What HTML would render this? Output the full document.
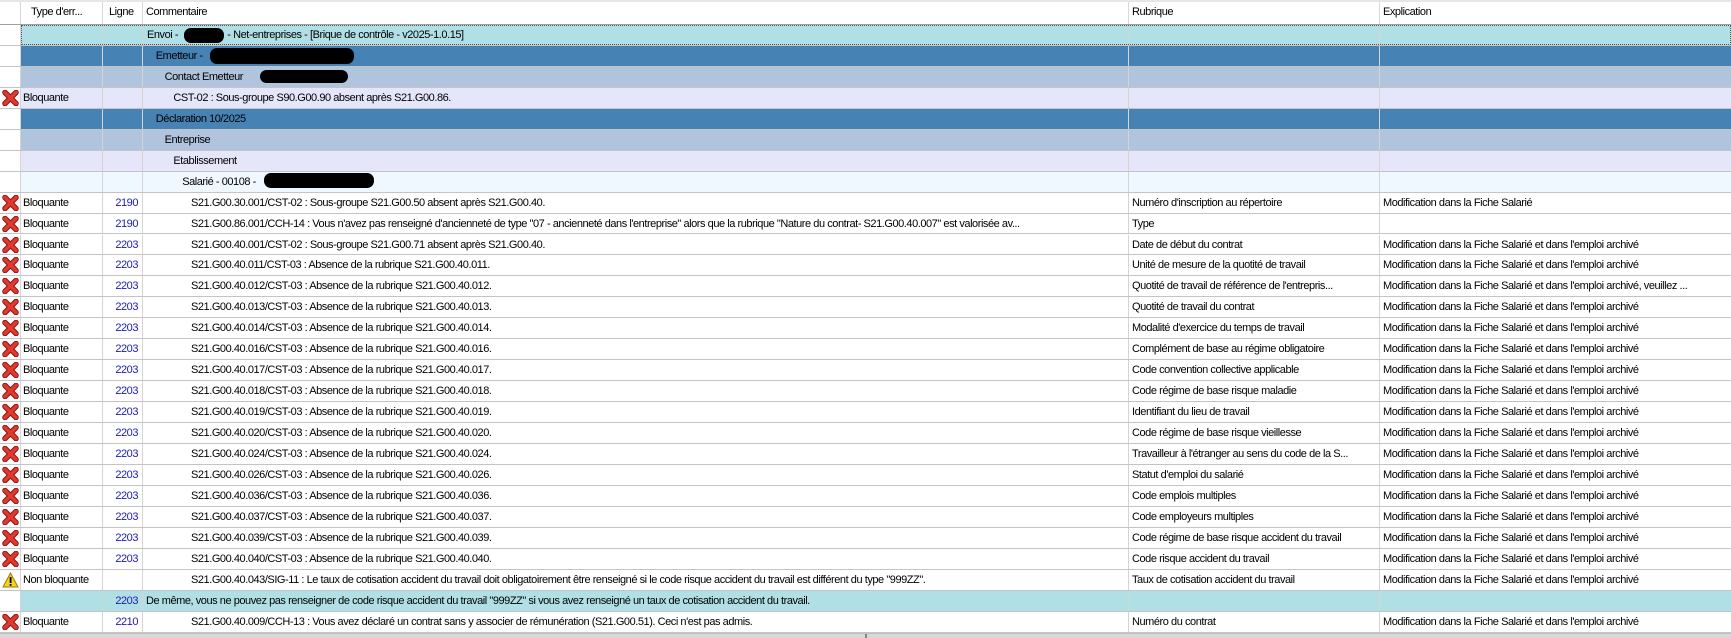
<!DOCTYPE html>
<html><head><meta charset="utf-8"><style>
*{margin:0;padding:0;box-sizing:border-box}
body{width:1731px;height:638px;overflow:hidden;background:#fff;font-family:"Liberation Sans",Tahoma,sans-serif;font-size:11px;letter-spacing:-0.45px;color:#000;position:relative}
.hdr{position:absolute;left:0;top:0;width:1731px;height:25px;border-top:2px solid #e4e6ea;border-bottom:1px solid #a0a0a0;background:#fff}
.hdr div{position:absolute;top:0;height:22px;line-height:21px;border-right:1px solid #d8d8d8;padding-left:4px}
.row{position:absolute;left:0;width:1731px;height:20.95px;border-bottom:1px solid #c4c4c4}
.c{position:absolute;top:0;height:100%;border-right:1px solid #d4d4d4;line-height:20px;white-space:nowrap;overflow:hidden}
.c0{left:0;width:21px;background:#fff}
.c1{left:21px;width:82px;padding-left:2px}
.c2{left:103px;width:40px;text-align:right;padding-right:4px;color:#1a1ab4}
.c3{left:143px;width:986px}
.c4{left:1129px;width:251px;padding-left:3px}
.c5{left:1380px;width:351px;padding-left:3px}
.blob{position:absolute;background:#000;border-radius:7px}
.ic{position:absolute;left:2px;top:2px}
.sb{position:absolute;left:0;top:633px;width:1731px;height:5px;background:#d8d8d8;border-top:1px solid #c0c0c0}
</style></head><body>
<div class="hdr">
<div style="left:0;width:21px"></div>
<div style="left:21px;width:82px;padding-left:10px">Type d'err...</div>
<div style="left:103px;width:40px;padding-left:6px">Ligne</div>
<div style="left:143px;width:986px;padding-left:3px">Commentaire</div>
<div style="left:1129px;width:251px;padding-left:3px">Rubrique</div>
<div style="left:1380px;width:351px;padding-left:3px;border:none">Explication</div>
</div>
<div id="rows"></div>
<div class="blob" style="left:184px;top:28px;width:40px;height:15px"></div>
<div class="blob" style="left:210px;top:48px;width:144px;height:16px"></div>
<div class="blob" style="left:260px;top:70px;width:88px;height:13px"></div>
<div class="blob" style="left:264px;top:173px;width:110px;height:15px"></div>
<div class="sb"><div style="position:absolute;left:865px;top:0;width:2px;height:4px;background:#888"></div></div>
<script>
const X='<svg class="ic" width="17" height="16" viewBox="0 0 17 16"><path d="M3 2.5L14 13.5M14 2.5L3 13.5" stroke="#8a1010" stroke-width="5.5" stroke-linecap="round"/><path d="M3 2.5L14 13.5M14 2.5L3 13.5" stroke="#e03a2e" stroke-width="3.6" stroke-linecap="round"/></svg>';
const W='<svg class="ic" width="17" height="16" viewBox="0 0 17 16"><path d="M8.5 1L16 15H1Z" fill="#f6d21a" stroke="#a07800" stroke-width="1"/><rect x="7.7" y="5" width="1.8" height="6" fill="#000"/><rect x="7.7" y="12" width="1.8" height="1.8" fill="#000"/></svg>';
const A='S21.G00.40.0';
const rows=[
['g','#b0e0e6','','','Envoi - <span style="display:inline-block;width:44px"></span> - Net-entreprises - [Brique de contrôle - v2025-1.0.15]',0,'',''],
['g','#4682b4','','','Emetteur -',1,'',''],
['g','#b0c4de','','','Contact Emetteur',2,'',''],
['x','#e6e6fa','Bloquante','','CST-02 : Sous-groupe S90.G00.90 absent après S21.G00.86.',3,'',''],
['g','#4682b4','','','Déclaration 10/2025',1,'',''],
['g','#b0c4de','','','Entreprise',2,'',''],
['g','#e6e6fa','','','Etablissement',3,'',''],
['g','#f0f8ff','','','Salarié - 00108 -',4,'',''],
['x','#fff','Bloquante','2190','S21.G00.30.001/CST-02 : Sous-groupe S21.G00.50 absent après S21.G00.40.',5,'Numéro d\'inscription au répertoire','Modification dans la Fiche Salarié'],
['x','#fff','Bloquante','2190','S21.G00.86.001/CCH-14 : Vous n\'avez pas renseigné d\'ancienneté de type "07 - ancienneté dans l\'entreprise" alors que la rubrique "Nature du contrat- S21.G00.40.007" est valorisée av...',5,'Type',''],
['x','#fff','Bloquante','2203',A+'01/CST-02 : Sous-groupe S21.G00.71 absent après S21.G00.40.',5,'Date de début du contrat','Modification dans la Fiche Salarié et dans l\'emploi archivé'],
];
const list=[['11','Unité de mesure de la quotité de travail',''],['12','Quotité de travail de référence de l\'entrepris...','Modification dans la Fiche Salarié et dans l\'emploi archivé, veuillez ...'],['13','Quotité de travail du contrat',''],['14','Modalité d\'exercice du temps de travail',''],['16','Complément de base au régime obligatoire',''],['17','Code convention collective applicable',''],['18','Code régime de base risque maladie',''],['19','Identifiant du lieu de travail',''],['20','Code régime de base risque vieillesse',''],['24','Travailleur à l\'étranger au sens du code de la S...',''],['26','Statut d\'emploi du salarié',''],['36','Code emplois multiples',''],['37','Code employeurs multiples',''],['39','Code régime de base risque accident du travail',''],['40','Code risque accident du travail','']];
for(const [n,r,e] of list) rows.push(['x','#fff','Bloquante','2203',A+n+'/CST-03 : Absence de la rubrique '+A+n+'.',5,r,e||'Modification dans la Fiche Salarié et dans l\'emploi archivé']);
rows.push(['w','#fff','Non bloquante','',A+'43/SIG-11 : Le taux de cotisation accident du travail doit obligatoirement être renseigné si le code risque accident du travail est différent du type "999ZZ".',5,'Taux de cotisation accident du travail','Modification dans la Fiche Salarié et dans l\'emploi archivé']);
rows.push(['g','#b0e0e6','','2203','De même, vous ne pouvez pas renseigner de code risque accident du travail "999ZZ" si vous avez renseigné un taux de cotisation accident du travail.',-1,'','']);
rows.push(['x','#fff','Bloquante','2210',A+'09/CCH-13 : Vous avez déclaré un contrat sans y associer de rémunération (S21.G00.51). Ceci n\'est pas admis.',5,'Numéro du contrat','Modification dans la Fiche Salarié et dans l\'emploi archivé']);
let h='';
rows.forEach((r,i)=>{
 const top=25+i*20.95;
 const bg=r[1];
 const ic=r[0]=='x'?X:r[0]=='w'?W:'';
 const pad=r[5]<0?3:4+r[5]*8.8;
 h+=`<div class="row" style="top:${top}px">`+
 `<div class="c c0">${ic}</div>`+
 `<div class="c c1" style="background:${bg}">${r[2]}</div>`+
 `<div class="c c2" style="background:${bg}">${r[3]}</div>`+
 `<div class="c c3" style="background:${bg};padding-left:${pad}px">${r[4]}</div>`+
 `<div class="c c4" style="background:${bg}">${r[6]}</div>`+
 `<div class="c c5" style="background:${bg};border-right:none">${r[7]}</div>`+
 (i==0?`<div style="position:absolute;left:21px;top:0;width:1710px;height:100%;outline:1px dotted #555;outline-offset:-1px"></div>`:'')+
 `</div>`;
});
document.getElementById('rows').innerHTML=h;
</script>
</body></html>
